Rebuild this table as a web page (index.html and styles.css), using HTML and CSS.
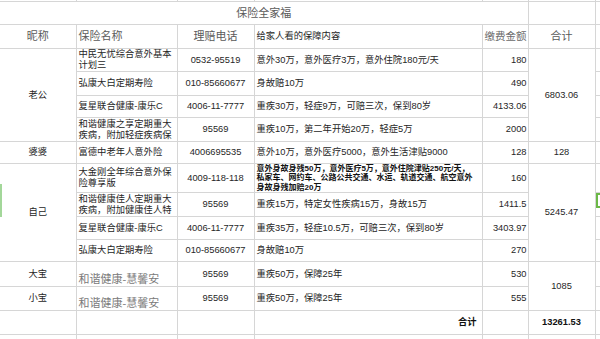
FILE: index.html
```html
<!DOCTYPE html>
<html lang="zh-CN">
<head>
<meta charset="utf-8">
<title>保险全家福</title>
<link rel="stylesheet" href="styles.css">
</head>
<body>
<div class="sheet">
<table class="grid">
<colgroup><col class="ca"><col class="cb"><col class="cc"><col class="cd"><col class="ce"><col class="cf"><col class="cg"></colgroup>
<tr class="r0"><td></td><td></td><td></td><td></td><td></td><td></td><td></td></tr>
<tr class="rt"><td colspan="5" class="title">保险全家福</td><td></td><td></td></tr>
<tr class="rh"><td class="hd c">昵称</td><td class="hd l">保险名称</td><td class="hd c">理赔电话</td><td class="l">给家人看的保障内容</td><td class="hd r fee">缴费金额</td><td class="hd c">合计</td><td></td></tr>
<tr class="h23"><td rowspan="4" class="c">老公</td><td class="l">中民无忧综合意外基本计划三</td><td class="c">0532-95519</td><td class="l">意外30万，意外医疗3万，意外住院180元/天</td><td class="r">180</td><td rowspan="4" class="c">6803.06</td><td></td></tr>
<tr class="h24"><td class="l">弘康大白定期寿险</td><td class="c">010-85660677</td><td class="l">身故赔10万</td><td class="r">490</td><td></td></tr>
<tr class="h22"><td class="l">复星联合健康-康乐C</td><td class="c">4006-11-7777</td><td class="l">重疾30万，轻症9万，可赔三次，保到80岁</td><td class="r">4133.06</td><td></td></tr>
<tr class="h24"><td class="l">和谐健康之享定期重大疾病，附加轻症疾病保</td><td class="c">95569</td><td class="l">重疾10万，第二年开始20万，轻症5万</td><td class="r">2000</td><td></td></tr>
<tr class="h22"><td class="c">婆婆</td><td class="l">富德中老年人意外险</td><td class="c">4006695535</td><td class="l">意外10万，意外医疗5000，意外生活津贴9000</td><td class="r">128</td><td class="c">128</td><td></td></tr>
<tr class="h29"><td rowspan="4" class="c">自己</td><td class="l">大金刚全年综合意外保险尊享版</td><td class="c">4009-118-118</td><td class="l fine">意外身故身残50万，意外医疗5万，意外住院津贴250元/天，<br>私家车、网约车、公路公共交通、水运、轨道交通、航空意外<br>身故身残加赔20万</td><td class="r">160</td><td rowspan="4" class="c">5245.47</td><td></td></tr>
<tr class="h24"><td class="l">和谐健康佳人定期重大疾病，附加健康佳人特</td><td class="c">95569</td><td class="l">重疾15万，特定女性疾病15万，身故15万</td><td class="r">1411.5</td><td></td></tr>
<tr class="h23"><td class="l">复星联合健康-康乐C</td><td class="c">4006-11-7777</td><td class="l">重疾35万，轻症10.5万，可赔三次，保到80岁</td><td class="r">3403.97</td><td></td></tr>
<tr class="h22"><td class="l">弘康大白定期寿险</td><td class="c">010-85660677</td><td class="l">身故赔10万</td><td class="r">270</td><td></td></tr>
<tr class="h24"><td class="c">大宝</td><td class="l soft">和谐健康-慧馨安</td><td class="c">95569</td><td class="l">重疾50万，保障25年</td><td class="r">530</td><td rowspan="2" class="c">1085</td><td></td></tr>
<tr class="h23"><td class="c">小宝</td><td class="l soft">和谐健康-慧馨安</td><td class="c">95569</td><td class="l">重疾50万，保障25年</td><td class="r">555</td><td></td></tr>
<tr class="h24"><td></td><td></td><td></td><td class="r b sum">合计</td><td></td><td class="c b">13261.53</td><td></td></tr>
<tr class="h23"><td></td><td></td><td></td><td></td><td></td><td></td><td></td></tr>
</table>
<div class="sel-left"></div>
<div class="sel-right"></div>
</div>
</body>
</html>
```

FILE: styles.css
```css
html, body {
  margin: 0;
  padding: 0;
  background: #ffffff;
  overflow: hidden;
}
.sheet {
  position: relative;
  width: 600px;
  height: 339px;
  overflow: hidden;
}
.grid {
  border-collapse: collapse;
  table-layout: fixed;
  width: 640px;
  font-family: "Liberation Sans", "Noto Sans CJK SC", sans-serif;
  font-size: 9.3px;
  line-height: 11px;
  color: #262626;
}
.ca { width: 76px; }
.cb { width: 101px; }
.cc { width: 77px; }
.cd { width: 228px; }
.ce { width: 46px; }
.cf { width: 67px; }
.cg { width: 45px; }
.grid td {
  border: 1px solid #d6d6d6;
  padding: 0 2px;
  vertical-align: middle;
  overflow: hidden;
  white-space: normal;
  word-break: break-all;
}
.grid tr td:first-child { border-left: none; }
.r0 td { height: 1px; border-top: none; padding: 0; }
.rt td { height: 22px; }
.rh td { height: 23px; }
.h22 td { height: 21px; }
.h23 td { height: 22px; }
.h24 td { height: 23px; }
.h29 td { height: 28px; }
.title {
  text-align: center;
  font-family: "Liberation Serif", "Noto Sans CJK SC", serif;
  font-size: 11px;
  color: #5a5a5a;
}
.hd {
  font-family: "Liberation Serif", "Noto Sans CJK SC", serif;
  font-size: 11px;
  color: #5a5a5a;
}
.grid td.fee {
  font-size: 10.5px;
  white-space: nowrap;
  padding: 0 1px 0 0;
  color: #6a6a6a;
}
.c { text-align: center; }
.l { text-align: left; }
.r { text-align: right; }
.grid td.r { padding-right: 1px; }
.grid td.sum { padding-right: 5px; }
.b { font-weight: bold; color: #111; }
.fine {
  font-size: 8px;
  line-height: 9.3px;
  font-weight: bold;
  color: #111;
  white-space: nowrap;
}
.grid td.soft {
  font-family: "Liberation Serif", "Noto Sans CJK SC", serif;
  font-size: 11px;
  color: #7a7a7a;
  vertical-align: bottom;
  padding-bottom: 1px;
}
.sel-left {
  position: absolute;
  left: 0;
  top: 184px;
  width: 2px;
  height: 33px;
  background: #a3d79a;
}
.sel-right {
  position: absolute;
  left: 596px;
  top: 193px;
  width: 8px;
  height: 11px;
  border: 2px solid #6cb848;
  border-right: none;
}
```
